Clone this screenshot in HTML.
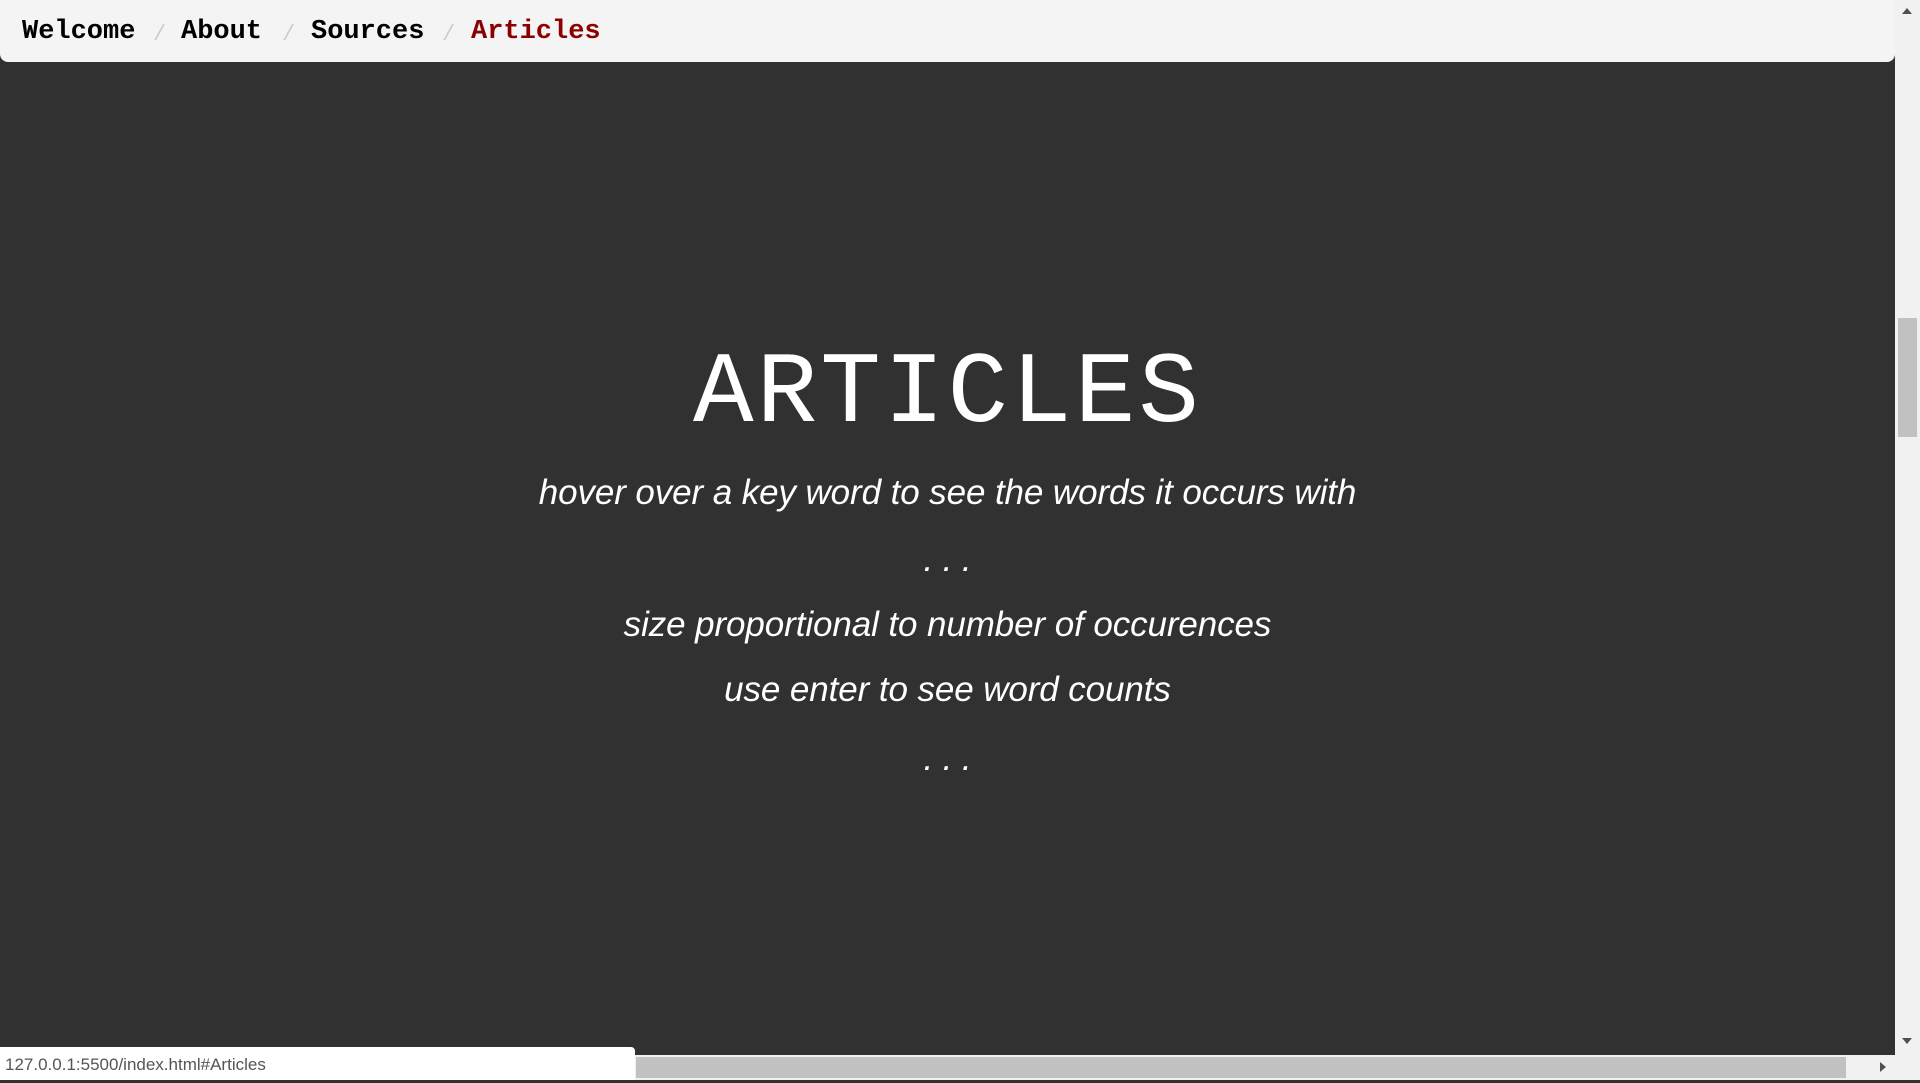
<!DOCTYPE html>
<html><head><meta charset="utf-8"><style>
html,body{margin:0;padding:0;width:1920px;height:1080px;overflow:hidden;background:#313131;}
.nav{position:absolute;left:0;top:0;width:1895px;height:62px;background:#f4f4f4;border-radius:0 0 8px 8px;font-family:"Liberation Mono","Courier New",monospace;font-size:27px;font-weight:bold;}
.nav span{position:absolute;top:16px;line-height:32px;color:#000;}
.nav .sep{color:#ccc;font-weight:normal;font-size:22px;}
.t{position:absolute;left:0;width:1895px;text-align:center;color:#fff;white-space:nowrap;}
.title{font-family:"Liberation Mono","Courier New",monospace;font-size:101px;letter-spacing:3px;top:345px;line-height:100px;}
.s{font-family:"Liberation Sans",sans-serif;font-style:italic;font-size:35px;line-height:40px;letter-spacing:-0.1px;}
.vs{position:absolute;left:1895px;top:0;width:25px;height:1080px;background:#f1f1f1;}
.thumb{position:absolute;left:1898px;top:318px;width:19px;height:119px;background:#c1c1c1;}
.status{position:absolute;left:0;top:1047px;width:635px;height:33px;background:#fff;border-radius:0 4px 0 0;font-family:"Liberation Sans",sans-serif;font-size:17px;color:#555;line-height:36px;padding-left:5px;box-sizing:border-box;}
.hs{position:absolute;left:635px;top:1055px;width:1260px;height:25px;background:#f1f1f1;}
.hthumb{position:absolute;left:636px;top:1057px;width:1210px;height:21px;background:#c1c1c1;}
</style></head><body>
<div class="nav">
<span style="left:22px">Welcome</span>
<span class="sep" style="left:153px;top:19px">/</span>
<span style="left:181px">About</span>
<span class="sep" style="left:282px;top:19px">/</span>
<span style="left:311px">Sources</span>
<span class="sep" style="left:442px;top:19px">/</span>
<span style="left:471px;color:#8b0000">Articles</span>
</div>
<div class="t title">ARTICLES</div>
<div class="t s" style="top:473px">hover over a key word to see the words it occurs with</div>
<div class="t s" style="top:540px">. . .</div>
<div class="t s" style="top:605px">size proportional to number of occurences</div>
<div class="t s" style="top:670px">use enter to see word counts</div>
<div class="t s" style="top:739px">. . .</div>
<div class="vs"></div><div class="thumb"></div>
<div style="position:absolute;left:1902px;top:8px;width:0;height:0;border-left:5px solid transparent;border-right:5px solid transparent;border-bottom:6px solid #505050"></div>
<div style="position:absolute;left:1902px;top:1038px;width:0;height:0;border-left:5px solid transparent;border-right:5px solid transparent;border-top:6px solid #505050"></div>
<div class="hs"></div><div class="hthumb"></div>
<div style="position:absolute;left:1880px;top:1062px;width:0;height:0;border-top:5px solid transparent;border-bottom:5px solid transparent;border-left:6px solid #505050"></div>
<div class="status">127.0.0.1:5500/index.html#Articles</div>
</body></html>
